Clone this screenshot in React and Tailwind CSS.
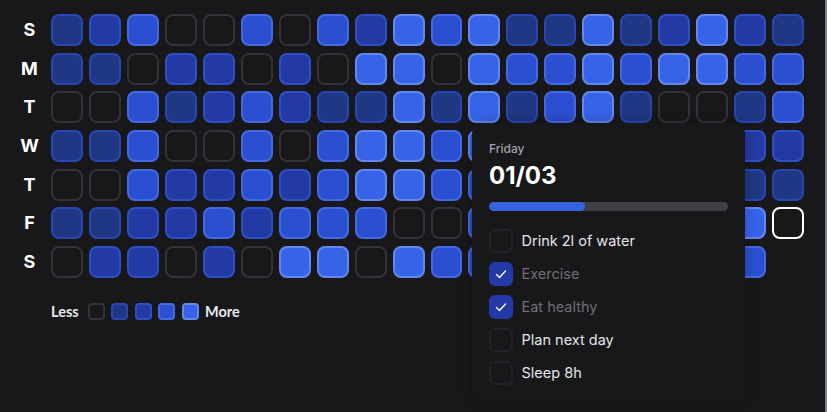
const LEVELS = [
  [1,2,3,0,0,3,0,3,2,4,3,4,1,1,4,1,2,4,2,1],
  [1,1,0,2,2,0,2,0,4,4,0,4,3,3,4,3,4,4,3,3],
  [0,0,3,1,2,3,2,1,1,4,1,4,1,3,4,1,0,0,1,3],
  [1,1,3,0,0,3,0,3,4,4,3,4,3,3,2,3,4,2,2,2],
  [0,0,3,2,2,3,2,3,4,4,3,3,2,3,4,1,2,3,1,1],
  [1,1,2,2,3,2,3,3,3,0,0,3,3,2,3,4,2,3,4,5],
  [0,2,2,0,2,0,4,4,0,4,3,3,2,4,3,2,3,3,3,-1],
];
const DAYS = ["S", "M", "T", "W", "T", "F", "S"];
const STYLE = {
  0: "border-[#323237] bg-[#18181b]",
  1: "border-[#2747b4] bg-[#203783]",
  2: "border-[#2f50c4] bg-[#2339a3]",
  3: "border-[#4569e0] bg-[#2a4fd0]",
  4: "border-[#6488ec] bg-[#3763e8]",
  5: "border-white bg-[#18181b]",
};
const TASKS = [
  ["Drink 2l of water", false],
  ["Exercise", true],
  ["Eat healthy", true],
  ["Plan next day", false],
  ["Sleep 8h", false],
];

function Box({ task }) {
  const [label, done] = task;
  return (
    <div className="flex h-[24px] items-center gap-[8.5px]">
      <span className={`flex size-[24px] items-center justify-center rounded-[6px] ${done ? "bg-[#2339a8]" : "border-2 border-[#232327]"}`}>
        {done && (
          <svg width="12" height="12" viewBox="0 0 12 12" fill="none" stroke="white" strokeWidth="1.4" strokeLinecap="round" strokeLinejoin="round">
            <path d="M1.5 6.5 L4.5 9.5 L10.5 3" />
          </svg>
        )}
      </span>
      <span className={`text-[14.5px] leading-none ${done ? "text-[#6f6f76]" : "text-[#e4e4e7]"}`}>{label}</span>
    </div>
  );
}

export default function App() {
  return (
    <div className="relative flex h-[412px] w-[827px] flex-col overflow-hidden border-r-2 border-[#7c7c80] bg-[#18181b] pt-[14px] font-['Inter',sans-serif]">
      <div className="flex">
        <div className="flex w-[51px] flex-col gap-y-[6.67px]">
          {DAYS.map((d, i) => (
            <div key={i} className="flex h-[32px] items-center justify-center pl-[8px] text-[18px] font-bold leading-none text-white">{d}</div>
          ))}
        </div>
        <div className="grid w-[753px] grid-cols-[repeat(20,minmax(0,1fr))] auto-rows-[32px] gap-x-[6px] gap-y-[6.67px]">
          {LEVELS.map((row, r) =>
            row.map((l, c) =>
              l < 0 ? <div key={`${r}-${c}`} /> : <div key={`${r}-${c}`} className={`rounded-[8px] border-2 ${STYLE[l]}`} />
            )
          )}
        </div>
      </div>

      <div className="mt-[25px] flex h-[18px] items-center pl-[51px] font-['Lato',sans-serif] text-[14.5px] font-bold leading-[18px] text-[#e8e8ea]">
        <span className="mr-[6.5px] w-[30px]">Less</span>
        <div className="flex gap-[6.5px]">
          {[0, 1, 2, 3, 4].map((l) => (
            <div key={l} className={`size-[17px] rounded-[4px] border-2 ${STYLE[l]}`} />
          ))}
        </div>
        <span className="ml-[6.5px]">More</span>
      </div>

      <div className="absolute left-[472px] top-[123px] h-[279px] w-[273px] rounded-[10px] bg-[#18181b] px-[17px] pt-[18px] shadow-[0_0_12px_rgba(0,0,0,0.25)]">
        <div className="text-[12px] font-medium leading-[16px] text-[#a1a1aa]">Friday</div>
        <div className="mt-[4px] text-[24px] font-bold leading-[30px] text-white">01/03</div>
        <div className="mt-[11px] h-[9px] w-[239px] overflow-hidden rounded-full bg-[#3f3f46]">
          <div className="h-full w-[40%] rounded-full bg-[#3563e0]" />
        </div>
        <div className="mt-[18px] flex flex-col gap-[9px]">
          {TASKS.map((t) => <Box key={t[0]} task={t} />)}
        </div>
      </div>
    </div>
  );
}
